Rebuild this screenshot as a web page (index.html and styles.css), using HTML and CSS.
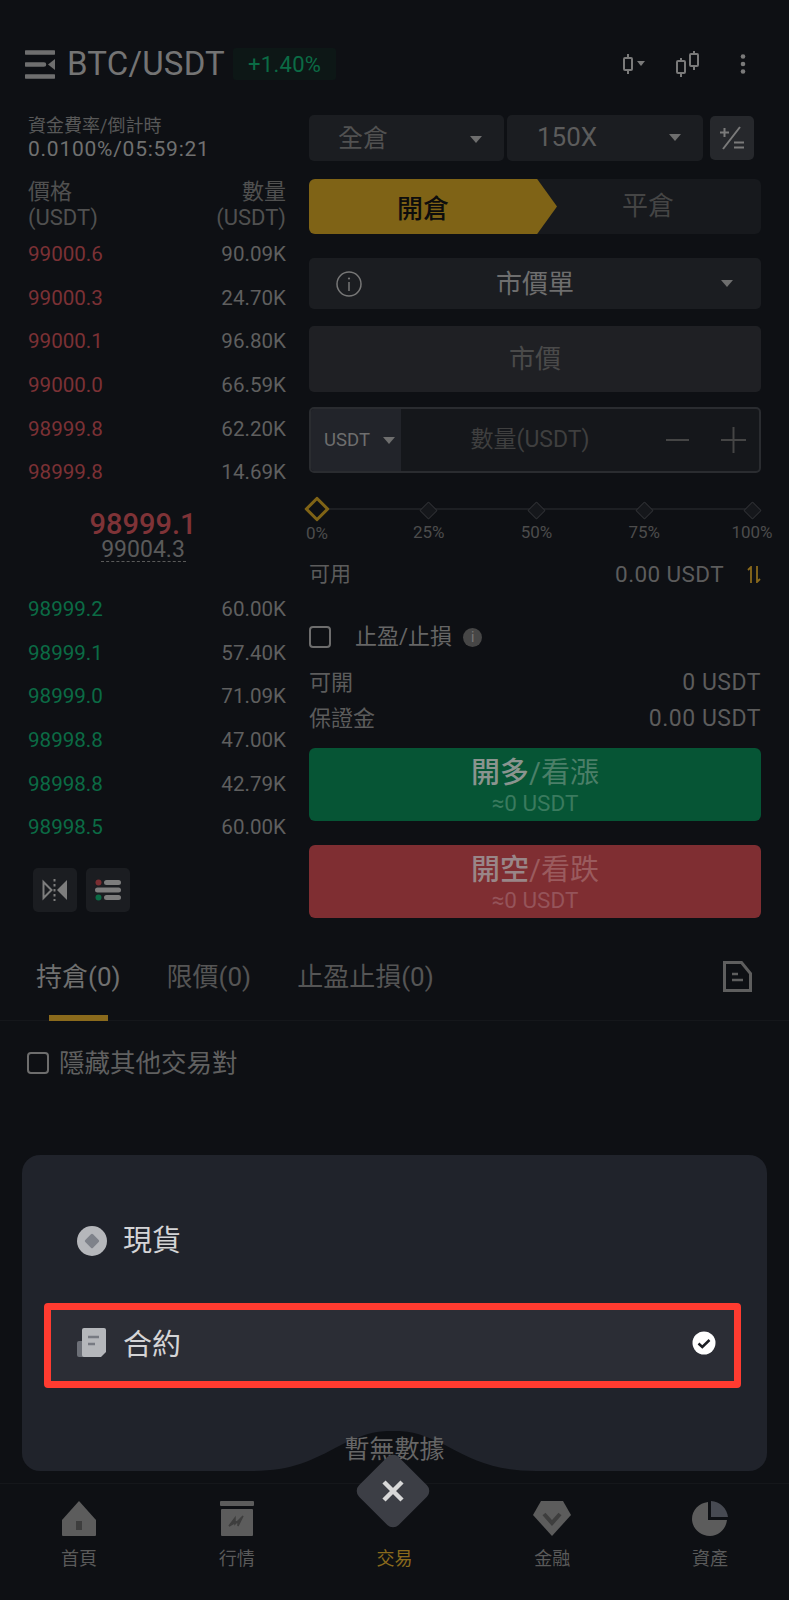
FILE: index.html
```html
<!DOCTYPE html>
<html lang="zh-Hant">
<head>
    <meta charset="UTF-8">
    <meta name="viewport" content="width=device-width, initial-scale=1.0">
    <title>BTC/USDT</title>
    <link rel="stylesheet" href="styles.css">
</head>
<body>
<div class="page">
    <!-- top bar -->
    <header class="topbar">
        <svg class="menu-icon" viewBox="0 0 30 29"><path d="M1 2.500h28M1 14.500h18M1 26.500h28" stroke="#6f6f6f" stroke-width="4.500" stroke-linecap="round" fill="none"/><path d="M30 9v11l-7-5.500z" fill="#6f6f6f"/></svg>
        <span class="pair">BTC/USDT</span>
        <span class="change">+1.40%</span>
        <div class="top-tools">
            <svg class="tool-a" viewBox="0 0 24 20"><path d="M6 0v4M6 16v4" stroke="#7a7a7a" stroke-width="2"/><rect x="2" y="4" width="8" height="12" rx="1" fill="none" stroke="#7a7a7a" stroke-width="2"/><path d="M15 7h8l-4 5z" fill="#7a7a7a"/></svg>
            <svg class="tool-b" viewBox="0 0 24 26"><path d="M5 7v3M5 22v4M18 0v3M18 15v4" stroke="#7a7a7a" stroke-width="2"/><rect x="1" y="10" width="8" height="12" rx="1" fill="none" stroke="#7a7a7a" stroke-width="2"/><rect x="14" y="3" width="8" height="12" rx="1" fill="none" stroke="#7a7a7a" stroke-width="2"/></svg>
            <svg class="tool-c" viewBox="0 0 6 20"><circle cx="3" cy="2.500" r="2.300" fill="#7a7a7a"/><circle cx="3" cy="10" r="2.300" fill="#7a7a7a"/><circle cx="3" cy="17.500" r="2.300" fill="#7a7a7a"/></svg>
        </div>
    </header>

    <main class="trade">
        <!-- order book -->
        <section class="book">
            <div class="funding-label">資金費率/倒計時</div>
            <div class="funding-value">0.0100%/05:59:21</div>
            <div class="book-head">
                <div>價格<br>(USDT)</div>
                <div class="right">數量<br>(USDT)</div>
            </div>
            <div class="book-row"><span class="ask">99000.6</span><span>90.09K</span></div>
            <div class="book-row"><span class="ask">99000.3</span><span>24.70K</span></div>
            <div class="book-row"><span class="ask">99000.1</span><span>96.80K</span></div>
            <div class="book-row"><span class="ask">99000.0</span><span>66.59K</span></div>
            <div class="book-row"><span class="ask">98999.8</span><span>62.20K</span></div>
            <div class="book-row"><span class="ask">98999.8</span><span>14.69K</span></div>
            <div class="mid">
                <div class="mid-price">98999.1</div>
                <div class="mark-price">99004.3</div>
            </div>
            <div class="book-row"><span class="bid">98999.2</span><span>60.00K</span></div>
            <div class="book-row"><span class="bid">98999.1</span><span>57.40K</span></div>
            <div class="book-row"><span class="bid">98999.0</span><span>71.09K</span></div>
            <div class="book-row"><span class="bid">98998.8</span><span>47.00K</span></div>
            <div class="book-row"><span class="bid">98998.8</span><span>42.79K</span></div>
            <div class="book-row"><span class="bid">98998.5</span><span>60.00K</span></div>
            <div class="book-tools">
                <button class="square">
                    <svg viewBox="0 0 26 22"><path d="M1.500 3l8 8-8 8z" fill="none" stroke="#7d7d7d" stroke-width="2"/><path d="M25 1v20l-10-10z" fill="#7d7d7d"/><path d="M12.500 0v22" stroke="#7d7d7d" stroke-width="2" stroke-dasharray="2.500 2.500"/></svg>
                </button>
                <button class="square">
                    <svg viewBox="0 0 26 22"><circle cx="3.500" cy="3.500" r="3" fill="#7b2e32"/><circle cx="3.500" cy="18.500" r="3" fill="#0b6b45"/><rect x="9" y="1" width="17" height="5" rx="2.500" fill="#7d7d7d"/><rect x="0" y="8.500" width="26" height="5" rx="2.500" fill="#7d7d7d"/><rect x="9" y="16" width="17" height="5" rx="2.500" fill="#7d7d7d"/></svg>
                </button>
            </div>
        </section>

        <!-- order form -->
        <section class="form">
            <div class="selects">
                <div class="select margin-mode"><span>全倉</span><i class="caret"></i></div>
                <div class="select leverage"><span>150X</span><i class="caret"></i></div>
                <button class="square calc">
                    <svg viewBox="0 0 26 24"><path d="M1 6.500h9M5.500 2v9M4 23L21 1M15 16.500h10M15 21.500h10" stroke="#7a7a7a" stroke-width="2" fill="none"/></svg>
                </button>
            </div>
            <div class="side-tabs">
                <div class="side-open">開倉</div>
                <div class="side-close">平倉</div>
            </div>
            <div class="order-type">
                <svg class="info" viewBox="0 0 26 26"><circle cx="13" cy="13" r="12" fill="none" stroke="#777" stroke-width="1.500"/><path d="M13 11v9" stroke="#777" stroke-width="1.500"/><circle cx="13" cy="7.500" r="1.100" fill="#777"/></svg>
                <span>市價單</span>
                <i class="caret"></i>
            </div>
            <div class="price-box">市價</div>
            <div class="amount-box">
                <div class="unit"><span>USDT</span><i class="caret small"></i></div>
                <div class="placeholder">數量(USDT)</div>
                <svg class="stepper" viewBox="0 0 80 26"><path d="M0 13h23M55 13h25M67.500 0v26" stroke="#454545" stroke-width="2"/></svg>
            </div>
            <div class="slider">
                <div class="stop on"><i></i><span>0%</span></div>
                <div class="stop"><i></i><span>25%</span></div>
                <div class="stop"><i></i><span>50%</span></div>
                <div class="stop"><i></i><span>75%</span></div>
                <div class="stop"><i></i><span>100%</span></div>
            </div>
            <div class="info-row avail">
                <span>可用</span>
                <span class="avail-value">0.00 USDT
                    <svg class="swap" viewBox="0 0 14 17"><path d="M4 17V1L1 4M10 0v16l3-3" stroke="#8a6a1c" stroke-width="1.800" fill="none"/></svg>
                </span>
            </div>
            <div class="tpsl">
                <i class="checkbox"></i>
                <span>止盈/止損</span>
                <b class="dot-info">i</b>
            </div>
            <div class="info-row open-size"><span>可開</span><span class="amount">0 USDT</span></div>
            <div class="info-row margin"><span>保證金</span><span class="amount">0.00 USDT</span></div>
            <button class="action long">
                <span class="action-title"><b>開多</b>/看漲</span>
                <span class="action-sub">≈0 USDT</span>
            </button>
            <button class="action short">
                <span class="action-title"><b>開空</b>/看跌</span>
                <span class="action-sub">≈0 USDT</span>
            </button>
        </section>
    </main>

    <!-- positions -->
    <div class="tabs">
        <div class="tab active">持倉(0)<i class="tab-line"></i></div>
        <div class="tab">限價(0)</div>
        <div class="tab">止盈止損(0)</div>
        <svg class="doc-icon" viewBox="0 0 29 31"><path d="M1.500 1.500h17l9 11v17h-26z" fill="none" stroke="#5e5e5e" stroke-width="3"/><path d="M9 13h6M9 19h11" stroke="#5e5e5e" stroke-width="2.500"/></svg>
    </div>
    <div class="hide-others"><i class="checkbox"></i><span>隱藏其他交易對</span></div>
    <div class="empty">暫無數據</div>

    <!-- bottom nav -->
    <nav class="nav">
        <div class="nav-item">
            <svg viewBox="0 0 34 35"><path d="M17 0l17 19v15a1 1 0 0 1-1 1H1a1 1 0 0 1-1-1V19z" fill="#5c5c5c"/><rect x="14" y="20" width="6" height="9" fill="#3e3e3e"/></svg>
            <span>首頁</span>
        </div>
        <div class="nav-item">
            <svg viewBox="0 0 34 35"><rect x="0" y="0" width="34" height="5" rx="1" fill="#5c5c5c"/><rect x="1" y="8" width="32" height="27" rx="1" fill="#5c5c5c"/><path d="M9 25l6-8v6l8-8-5 10v-5z" fill="#3e3e3e" stroke="#3e3e3e" stroke-width="1.500"/></svg>
            <span>行情</span>
        </div>
        <div class="nav-item current">
            <div class="nav-gap"></div>
            <span>交易</span>
        </div>
        <div class="nav-item">
            <svg viewBox="0 0 38 35"><path d="M8 0h22l8 14-19 21L0 14z" fill="#5c5c5c"/><path d="M11 13l8 9 8-9" fill="none" stroke="#3e3e3e" stroke-width="4"/></svg>
            <span>金融</span>
        </div>
        <div class="nav-item">
            <svg viewBox="0 0 36 35"><path d="M16 1v18h19c-1 9-8 16-17 16C8 35 0 27 0 18 0 9 7 2 16 1z" fill="#5c5c5c"/><path d="M19 0c9 .5 16 7.500 17 16H19z" fill="#474a52"/></svg>
            <span>資產</span>
        </div>
    </nav>

    <!-- popup menu above the nav -->
    <div class="popup">
        <div class="popup-row">
            <svg viewBox="0 0 30 30"><circle cx="15" cy="15" r="15" fill="#b5b7bb"/><rect x="9.500" y="9.500" width="11" height="11" rx="1.500" transform="rotate(45 15 15)" fill="#7e828a"/></svg>
            <span>現貨</span>
        </div>
        <div class="popup-row selected">
            <svg viewBox="0 0 30 30"><path d="M0 15a2 2 0 0 1 2-2h6v16H2a2 2 0 0 1-2-2z" fill="#6c6f77"/><path d="M5 2a2 2 0 0 1 2-2h20a2 2 0 0 1 2 2v22l-5 5H7a2 2 0 0 1-2-2z" fill="#b5b7bb"/><path d="M11 9h11M11 16h7" stroke="#777a82" stroke-width="2.500"/></svg>
            <span>合約</span>
            <svg class="check" viewBox="0 0 24 24"><circle cx="12" cy="12" r="11.500" fill="#fff"/><path d="M6.500 12.500l3.800 3.500 7.200-7" fill="none" stroke="#1c1e24" stroke-width="2.500"/></svg>
        </div>
        <svg class="notch" viewBox="0 0 285 40"><path d="M0 40C40 40 60 30 90 14 115 2 125 0 142 0s27 2 52 14c30 16 50 26 91 26z" fill="#0e1014"/></svg>
    </div>

    <!-- close button -->
    <div class="close-btn">
        <svg viewBox="0 0 24 22"><path d="M3 2l18 18M21 2L3 20" stroke="#d8d8d8" stroke-width="4.500"/></svg>
    </div>
</div>
</body>
</html>
```

FILE: styles.css
```css
* {
    margin: 0;
    padding: 0;
    box-sizing: border-box;
}

body {
    font-family: Roboto, "Noto Sans CJK TC", sans-serif;
    background-color: #0e1014;
    color: #6b6b6b;
}

i {
    display: block;
    font-style: normal;
}

button {
    font-family: inherit;
    border: none;
}

.page {
    position: relative;
    display: flex;
    flex-direction: column;
    width: 789px;
    height: 1600px;
    overflow: hidden;
    background-color: #0e1014;
}

/* top bar */
.topbar {
    display: flex;
    align-items: center;
    height: 40px;
    margin-top: 44px;
    padding-left: 25px;
}

.menu-icon {
    width: 30px;
    height: 29px;
}

.pair {
    margin-left: 12px;
    font-size: 33px;
    line-height: 38px;
    letter-spacing: 0.2px;
    color: #747474;
}

.change {
    display: flex;
    align-items: center;
    height: 32px;
    margin-left: 8px;
    padding: 0 15px;
    font-size: 22px;
    letter-spacing: 0.3px;
    color: #0b6b45;
    background-color: #0d1716;
    border-radius: 3px;
}

.top-tools {
    display: flex;
    align-items: center;
    margin-left: auto;
    padding-right: 43px;
}

.tool-a {
    width: 24px;
    height: 20px;
}

.tool-b {
    width: 24px;
    height: 26px;
    margin-left: 30px;
}

.tool-c {
    width: 6px;
    height: 20px;
    margin-left: 40px;
}

/* two columns */
.trade {
    display: grid;
    grid-template-columns: 258px 452px;
    column-gap: 23px;
    margin-top: 31px;
    padding-left: 28px;
}

/* order book */
.funding-label {
    height: 22px;
    font-size: 18px;
    line-height: 22px;
    color: #585858;
}

.funding-value {
    height: 24px;
    font-size: 21px;
    line-height: 24px;
    letter-spacing: 0.75px;
    color: #707070;
}

.book-head {
    display: flex;
    justify-content: space-between;
    height: 53px;
    margin-top: 18px;
    font-size: 22px;
    line-height: 26px;
    color: #505050;
}

.right {
    text-align: right;
}

.book-row {
    display: flex;
    justify-content: space-between;
    align-items: center;
    height: 43.700px;
    font-size: 20.600px;
    color: #5f5f5f;
}

.ask {
    color: #7b3135;
}

.bid {
    color: #0b6b45;
}

.mid {
    height: 93px;
    padding: 13px 28px 0 0;
    text-align: center;
}

.mid-price {
    height: 32px;
    font-size: 29px;
    font-weight: 500;
    line-height: 34px;
    color: #7f3337;
}

.mark-price {
    width: 85px;
    height: 23px;
    margin: 0 auto;
    font-size: 23px;
    line-height: 22px;
    color: #5a5a5a;
    border-bottom: 1px dashed #5a5a5a;
}

.book-tools {
    display: flex;
    gap: 9px;
    margin-top: 19px;
    padding-left: 5px;
}

.square {
    display: flex;
    justify-content: center;
    align-items: center;
    width: 44px;
    height: 44px;
    background-color: #1b1d21;
    border-radius: 5px;
}

.square svg {
    width: 26px;
    height: 22px;
}

/* order form */
.selects {
    display: flex;
    align-items: center;
    height: 46px;
}

.select {
    display: flex;
    justify-content: space-between;
    align-items: center;
    height: 46px;
    padding: 0 22px 2px 29px;
    font-size: 25px;
    line-height: 30px;
    color: #515151;
    background-color: #1b1d21;
    border-radius: 5px;
}

.margin-mode {
    width: 195px;
    padding-top: 2px;
    padding-bottom: 0;
}

.leverage {
    width: 196px;
    margin-left: 3px;
    padding-left: 30px;
    font-size: 26px;
    color: #5c5c5c;
}

.calc {
    margin-left: 7px;
    background-color: #26282c;
}

.calc svg {
    height: 24px;
}

.caret {
    width: 0;
    height: 0;
    border-left: 6px solid transparent;
    border-right: 6px solid transparent;
    border-top: 7px solid #6e6e6e;
}

.side-tabs {
    display: flex;
    height: 55px;
    margin-top: 18px;
    background-color: #17191d;
    border-radius: 6px;
}

.side-open {
    display: flex;
    justify-content: center;
    align-items: center;
    width: 248px;
    padding-right: 20px;
    font-size: 26px;
    font-weight: 500;
    color: #0d0d0d;
    background-color: #7f6316;
    border-radius: 6px 0 0 6px;
    clip-path: polygon(0 0, 92% 0, 100% 50%, 92% 100%, 0 100%);
}

.side-close {
    flex: 1;
    padding-right: 22px;
    text-align: center;
    font-size: 26px;
    line-height: 55px;
    color: #454545;
}

.order-type {
    display: flex;
    justify-content: center;
    align-items: center;
    position: relative;
    height: 51px;
    margin-top: 24px;
    font-size: 26px;
    line-height: 30px;
    color: #6e6e6e;
    background-color: #1b1d21;
    border-radius: 5px;
}

.order-type .info {
    position: absolute;
    left: 27px;
    width: 26px;
    height: 26px;
}

.order-type .caret {
    position: absolute;
    right: 28px;
}

.price-box {
    height: 66px;
    margin-top: 17px;
    font-size: 26px;
    line-height: 66px;
    text-align: center;
    color: #4a4a4a;
    background-color: #1f2024;
    border-radius: 5px;
}

.amount-box {
    display: flex;
    align-items: center;
    height: 66px;
    margin-top: 15px;
    background-color: #15171b;
    border: 2px solid #2a2c30;
    border-radius: 5px;
    overflow: hidden;
}

.unit {
    display: flex;
    justify-content: space-between;
    align-items: center;
    flex-shrink: 0;
    width: 90px;
    height: 100%;
    padding: 0 6px 0 13px;
    font-size: 18.500px;
    color: #6e6e6e;
    background-color: #22242a;
}

.placeholder {
    width: 258px;
    flex-shrink: 0;
    font-size: 23px;
    line-height: 28px;
    text-align: center;
    color: #3f3f3f;
}

.stepper {
    width: 80px;
    height: 26px;
    margin-left: 7px;
    flex-shrink: 0;
}

.slider {
    position: relative;
    display: flex;
    justify-content: space-between;
    height: 48px;
    margin: 24px -11px 0 -12px;
}

.slider::before {
    content: "";
    position: absolute;
    left: 20px;
    right: 20px;
    top: 11px;
    height: 2px;
    background-color: #1d1f23;
}

.stop {
    position: relative;
    display: flex;
    flex-direction: column;
    align-items: center;
    width: 40px;
    font-size: 17px;
    color: #4c4c4c;
}

.stop i {
    width: 13px;
    height: 13px;
    margin-top: 7px;
    background-color: #15171b;
    border: 1px solid #2c2e32;
    border-radius: 1px;
    transform: rotate(45deg);
}

.stop span {
    margin-top: 6px;
    line-height: 19px;
}

.stop.on i {
    width: 18px;
    height: 18px;
    margin-top: 3px;
    background-color: #0e1014;
    border: 3px solid #7f6316;
}

.stop:nth-child(2) {
    left: 3px;
}

.stop:nth-child(3) {
    left: 2px;
}

.stop:nth-child(4) {
    left: 1px;
}

.info-row {
    display: flex;
    justify-content: space-between;
    align-items: center;
    font-size: 21px;
    line-height: 28px;
    color: #5c5c5c;
}

.avail {
    height: 28px;
    margin-top: 15px;
}

.avail-value {
    display: flex;
    align-items: center;
    font-size: 22.500px;
    letter-spacing: 0.4px;
}

.swap {
    width: 14px;
    height: 17px;
    margin-left: 23px;
}

.tpsl {
    display: flex;
    align-items: center;
    height: 28px;
    margin-top: 35px;
    font-size: 22px;
    line-height: 28px;
    color: #666;
}

.checkbox {
    width: 22px;
    height: 22px;
    border: 2px solid #6d6d6d;
    border-radius: 4px;
}

.tpsl span {
    margin-left: 24px;
}

.dot-info {
    width: 19px;
    height: 19px;
    margin-left: 11px;
    font-size: 14px;
    font-weight: 400;
    line-height: 19px;
    text-align: center;
    color: #777;
    background-color: #464646;
    border-radius: 50%;
}

.open-size {
    height: 32px;
    margin-top: 16px;
    font-size: 22px;
}

.margin {
    height: 32px;
    margin-top: 4px;
    font-size: 22px;
}

.amount {
    font-size: 23px;
    letter-spacing: 0.5px;
}

.action {
    display: flex;
    flex-direction: column;
    align-items: center;
    width: 100%;
    height: 73px;
    padding-top: 6px;
    border-radius: 6px;
}

.action-title {
    font-size: 29px;
    line-height: 38px;
}

.action-title b {
    font-weight: 500;
}

.action-sub {
    font-size: 22.500px;
    line-height: 22px;
}

.long {
    margin-top: 13px;
    background-color: #065535;
}

.long .action-title {
    color: #4b7f68;
}

.long b {
    color: #8a948f;
}

.long .action-sub {
    color: #3a7a5e;
}

.short {
    margin-top: 24px;
    background-color: #7f2e32;
}

.short .action-title {
    color: #9a5b5e;
}

.short b {
    color: #998688;
}

.short .action-sub {
    color: #95545a;
}

/* positions */
.tabs {
    display: flex;
    align-items: flex-start;
    gap: 46px;
    height: 65px;
    margin-top: 38px;
    padding-left: 36px;
    border-bottom: 1px solid #15171b;
    font-size: 26px;
    line-height: 42px;
    color: #555;
}

.tab.active {
    color: #707070;
}

.tab-line {
    width: 59px;
    height: 6px;
    margin: 17px auto 0;
    background-color: #8a6a1c;
}

.doc-icon {
    width: 29px;
    height: 31px;
    margin: 5px 37px 0 auto;
}

.hide-others {
    display: flex;
    align-items: center;
    height: 30px;
    margin-top: 27px;
    padding-left: 27px;
    font-size: 25.500px;
    line-height: 30px;
    color: #606060;
}

.hide-others span {
    margin-left: 10px;
}

.empty {
    position: relative;
    z-index: 2;
    margin-top: auto;
    margin-bottom: 19px;
    font-size: 25px;
    line-height: 28px;
    text-align: center;
    color: #666;
}

/* bottom nav */
.nav {
    display: grid;
    grid-template-columns: repeat(5, 1fr);
    height: 117px;
    padding-top: 17px;
    border-top: 1px solid #15171b;
}

.nav-item {
    display: flex;
    flex-direction: column;
    align-items: center;
    font-size: 18px;
    color: #5a5a5a;
}

.nav-item svg,
.nav-gap {
    height: 35px;
}

.nav-item span {
    margin-top: 11px;
    line-height: 24px;
}

.current {
    color: #8a6a1c;
}

/* popup */
.popup {
    position: absolute;
    left: 22px;
    top: 1155px;
    width: 745px;
    height: 316px;
    padding: 43px 26px 0 22px;
    background-color: #20232b;
    border-radius: 18px;
    z-index: 1;
}

.popup-row {
    display: flex;
    align-items: center;
    height: 85px;
    padding: 0 18px 0 26px;
    border: 7px solid transparent;
    font-size: 29px;
    line-height: 36px;
    color: #d4d4d6;
}

.popup-row svg {
    width: 30px;
    height: 30px;
    margin-right: 16px;
}

.selected {
    margin-top: 20px;
    padding-bottom: 6px;
    background-color: #2b2d35;
    border-color: #ff3b30;
    border-radius: 4px;
}

.selected span {
    padding-top: 4px;
}

.popup-row .check {
    width: 24px;
    height: 24px;
    margin: 0 0 0 auto;
}

.notch {
    position: absolute;
    left: 229px;
    bottom: 0;
    width: 285px;
    height: 40px;
}

.close-btn {
    position: absolute;
    left: 365px;
    top: 1463px;
    display: flex;
    justify-content: center;
    align-items: center;
    width: 56px;
    height: 56px;
    background-color: #3c3e45;
    border-radius: 8px;
    transform: rotate(45deg);
    z-index: 3;
}

.close-btn svg {
    width: 24px;
    height: 22px;
    transform: rotate(-45deg);
}
```
